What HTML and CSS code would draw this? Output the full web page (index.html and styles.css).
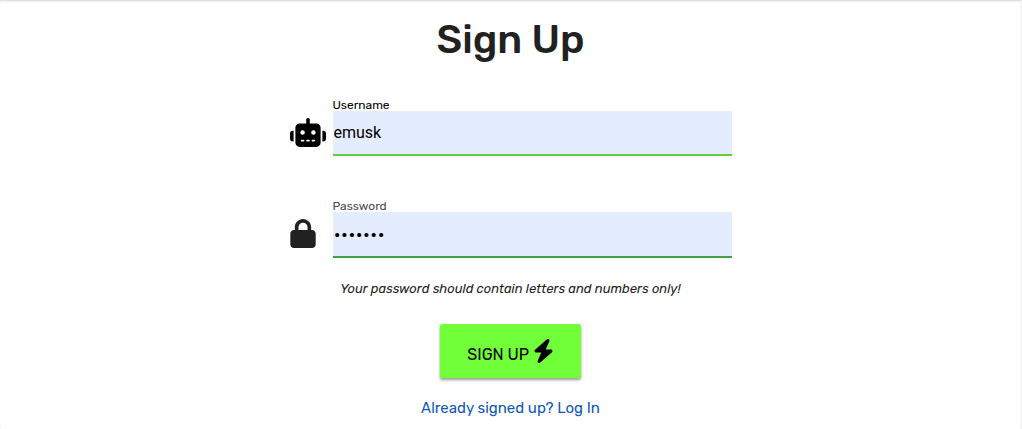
FILE: index.html
```html
<!DOCTYPE html>
<html lang="en">
<head>
<meta charset="utf-8">
<meta name="viewport" content="width=device-width, initial-scale=1">
<title>Sign Up</title>
<link rel="stylesheet" href="styles.css">
</head>
<body>
<main class="page">
  <h1 class="title">Sign Up</h1>
  <form class="form">
    <div class="field">
      <svg class="field-icon robot" viewBox="0 0 640 512" aria-hidden="true"><path d="M320 0c17.700 0 32 14.300 32 32V96H472c39.800 0 72 32.200 72 72V440c0 39.800-32.200 72-72 72H168c-39.800 0-72-32.200-72-72V168c0-39.800 32.200-72 72-72H288V32c0-17.700 14.300-32 32-32zM208 384c-8.800 0-16 7.200-16 16s7.200 16 16 16h32c8.800 0 16-7.200 16-16s-7.200-16-16-16H208zm96 0c-8.800 0-16 7.200-16 16s7.200 16 16 16h32c8.800 0 16-7.200 16-16s-7.200-16-16-16H304zm96 0c-8.800 0-16 7.200-16 16s7.200 16 16 16h32c8.800 0 16-7.200 16-16s-7.200-16-16-16H400zM264 256a40 40 0 1 0-80 0 40 40 0 1 0 80 0zm152 40a40 40 0 1 0 0-80 40 40 0 1 0 0 80zM48 224H64V416H48c-26.500 0-48-21.500-48-48V272c0-26.500 21.500-48 48-48zm544 0c26.500 0 48 21.500 48 48v96c0 26.500-21.500 48-48 48H576V224h16z"/></svg>
      <div class="control">
        <label class="label label-active" for="username">Username</label>
        <input class="input input-active" id="username" type="text" value="emusk">
      </div>
    </div>
    <div class="field">
      <svg class="field-icon lock" viewBox="0 0 448 512" aria-hidden="true"><path d="M144 144v48H304V144c0-44.200-35.800-80-80-80s-80 35.800-80 80zM80 192V144C80 64.500 144.500 0 224 0s144 64.500 144 144v48h16c35.300 0 64 28.700 64 64V448c0 35.300-28.700 64-64 64H64c-35.300 0-64-28.700-64-64V256c0-35.300 28.700-64 64-64H80z"/></svg>
      <div class="control">
        <label class="label" for="password">Password</label>
        <input class="input input-password" id="password" type="password" value="abc1234">
      </div>
    </div>
    <p class="hint">Your password should contain letters and numbers only!</p>
    <button class="submit" type="submit">SIGN UP <svg class="bolt" viewBox="0 0 448 512" aria-hidden="true"><path d="M349.400 44.600c5.900-13.700 1.500-29.700-10.600-38.500s-28.600-8-39.900 1.800l-256 224c-10 8.800-13.600 22.900-8.900 35.300S50.700 288 64 288H175.500L98.600 467.400c-5.900 13.700-1.500 29.700 10.600 38.500s28.600 8 39.900-1.800l256-224c10-8.800 13.600-22.900 8.900-35.300s-16.600-20.700-30-20.700H272.500L349.400 44.600z"/></svg></button>
    <a class="login" href="#">Already signed up? Log In</a>
  </form>
</main>
</body>
</html>
```
FILE: styles.css
```css
* {
  box-sizing: border-box;
}

body {
  margin: 0;
  color: #212121;
  font-family: Rubik, Inter, Roboto, sans-serif;
}

.page {
  display: flex;
  flex-direction: column;
  align-items: center;
  min-height: 100vh;
  padding: 15px 16px 8px;
  border-top: 1px solid #e0e0e0;
  border-right: 1px solid #f0f0f0;
  box-shadow: inset 0 1px 2px #eeeeee;
}

.title {
  margin: 0 0 35px;
  font-size: 40px;
  line-height: 48px;
  font-weight: 500;
}

.form {
  display: flex;
  flex-direction: column;
  align-items: center;
  width: 100%;
  max-width: 442px;
}

.field {
  display: flex;
  align-items: center;
  width: 100%;
  margin-bottom: 44px;
}

.field + .field {
  margin-bottom: 22px;
}

.field-icon {
  flex: none;
  height: 29px;
  margin-top: 10px;
}

.robot {
  width: 36px;
  margin-right: 7px;
  fill: #000;
}

.lock {
  width: 26px;
  margin-top: 8px;
  margin-right: 17px;
  fill: #212121;
}

.control {
  display: flex;
  flex: 1;
  flex-direction: column;
}

.label {
  color: #4a4a4a;
  font-size: 12px;
  line-height: 12px;
}

.label-active {
  color: #000;
}

.input {
  width: 100%;
  height: 45px;
  padding: 0 1px;
  border: 0;
  border-bottom: 2px solid #43a047;
  border-radius: 0;
  outline: 0;
  background: #e4edfd;
  color: #000;
  font-family: Roboto, sans-serif;
  font-size: 16px;
}

.input-active {
  border-bottom-color: #5cd13a;
}

.input-password {
  height: 46px;
  font-family: Inter, sans-serif;
  font-size: 13px;
}

.hint {
  margin: 0 0 26px;
  font-size: 13px;
  line-height: 18px;
  font-style: italic;
}

.submit {
  height: 54px;
  padding: 0 27px;
  border: 0;
  border-radius: 2px;
  background: #70ff38;
  box-shadow: 0 2px 3px #00000066;
  color: #000;
  font-family: inherit;
  font-size: 16px;
}

.bolt {
  width: 21px;
  height: 24px;
  vertical-align: -3px;
}

.login {
  margin-top: 20px;
  color: #1259b5;
  font-size: 15px;
  line-height: 20px;
  text-decoration: none;
}
```
